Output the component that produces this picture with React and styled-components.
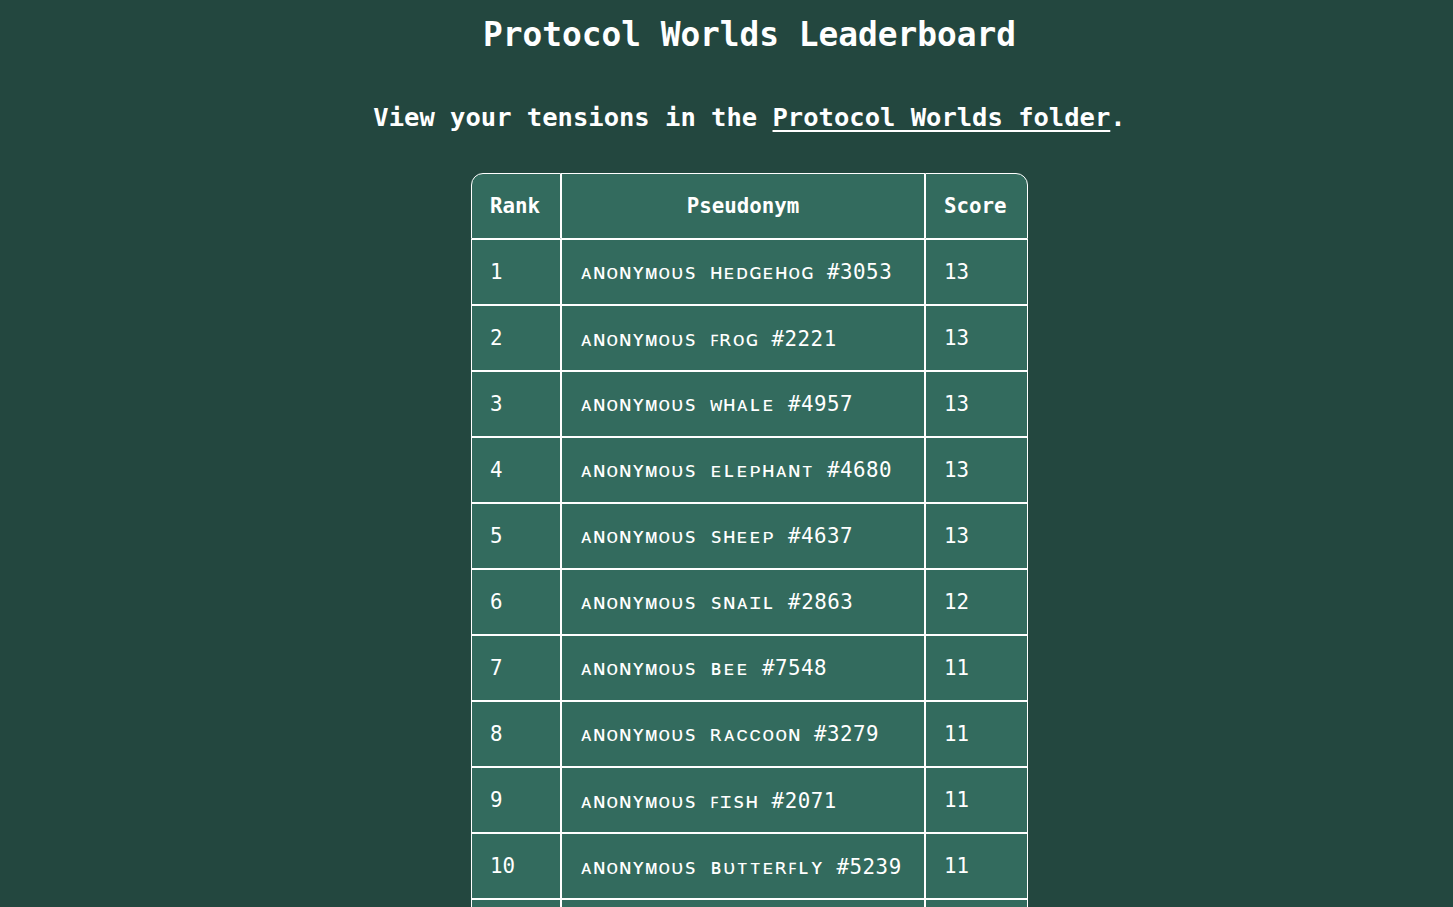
import React from 'react';
import styled, { createGlobalStyle } from 'styled-components';

const GlobalStyle = createGlobalStyle`
  html, body {
    margin: 0;
    padding: 0;
    background: #23473f;
  }
  body {
    font-family: "DejaVu Sans Mono", "Liberation Mono", monospace;
    color: #ffffff;
  }
`;

const Page = styled.main`
  display: flex;
  flex-direction: column;
  align-items: center;
  min-height: 100vh;
  padding: 14px 0 0 46px;
  box-sizing: border-box;
`;

const Title = styled.h1`
  margin: 0;
  font-size: 32.8px;
  font-weight: bold;
  line-height: 42px;
`;

const Lead = styled.p`
  margin: 44px 0 0;
  font-size: 25.5px;
  font-weight: bold;
  line-height: 34px;

  a {
    color: #ffffff;
    text-decoration: underline;
    text-underline-offset: 4px;
    text-decoration-thickness: 2px;
  }
`;

const Table = styled.table`
  margin-top: 39px;
  border-collapse: separate;
  border-spacing: 0;
  font-size: 20.8px;
  table-layout: fixed;
  width: 557px;
`;

const Th = styled.th`
  width: ${({ $w }) => $w}px;
  height: 66px;
  padding: 0 18px;
  box-sizing: border-box;
  background: #336b5e;
  border: 1px solid #ffffff;
  font-weight: bold;
  text-align: ${({ $align }) => $align || 'center'};

  &:first-child { border-top-left-radius: 12px; }
  &:last-child { border-top-right-radius: 12px; }
`;

const Td = styled.td`
  height: 64px;
  padding: 0 18px;
  background: #336b5e;
  border: 1px solid #ffffff;
  font-weight: normal;
  white-space: nowrap;
`;

const Name = styled.span`
  font-size: 20.8px;
  letter-spacing: 0.5px;
`;

const rows = [
  [1, 'ᴀɴᴏɴʏᴍᴏᴜs ʜᴇᴅɢᴇʜᴏɢ', '#3053', 13],
  [2, 'ᴀɴᴏɴʏᴍᴏᴜs ꜰʀᴏɢ', '#2221', 13],
  [3, 'ᴀɴᴏɴʏᴍᴏᴜs ᴡʜᴀʟᴇ', '#4957', 13],
  [4, 'ᴀɴᴏɴʏᴍᴏᴜs ᴇʟᴇᴘʜᴀɴᴛ', '#4680', 13],
  [5, 'ᴀɴᴏɴʏᴍᴏᴜs sʜᴇᴇᴘ', '#4637', 13],
  [6, 'ᴀɴᴏɴʏᴍᴏᴜs sɴᴀɪʟ', '#2863', 12],
  [7, 'ᴀɴᴏɴʏᴍᴏᴜs ʙᴇᴇ', '#7548', 11],
  [8, 'ᴀɴᴏɴʏᴍᴏᴜs ʀᴀᴄᴄᴏᴏɴ', '#3279', 11],
  [9, 'ᴀɴᴏɴʏᴍᴏᴜs ꜰɪsʜ', '#2071', 11],
  [10, 'ᴀɴᴏɴʏᴍᴏᴜs ʙᴜᴛᴛᴇʀꜰʟʏ', '#5239', 11],
  [11, 'ᴀɴᴏɴʏᴍᴏᴜs ᴏᴡʟ', '#1408', 10],
];

export default function App() {
  return (
    <>
      <GlobalStyle />
      <Page>
        <Title>Protocol Worlds Leaderboard</Title>
        <Lead>
          View your tensions in the <a href="#folder">Protocol Worlds folder</a>.
        </Lead>
        <Table>
          <thead>
            <tr>
              <Th $w={90} $align="left">Rank</Th>
              <Th $w={364}>Pseudonym</Th>
              <Th $w={103} $align="left">Score</Th>
            </tr>
          </thead>
          <tbody>
            {rows.map(([rank, name, tag, score]) => (
              <tr key={rank}>
                <Td>{rank}</Td>
                <Td>
                  <Name>{name} {tag}</Name>
                </Td>
                <Td>{score}</Td>
              </tr>
            ))}
          </tbody>
        </Table>
      </Page>
    </>
  );
}
